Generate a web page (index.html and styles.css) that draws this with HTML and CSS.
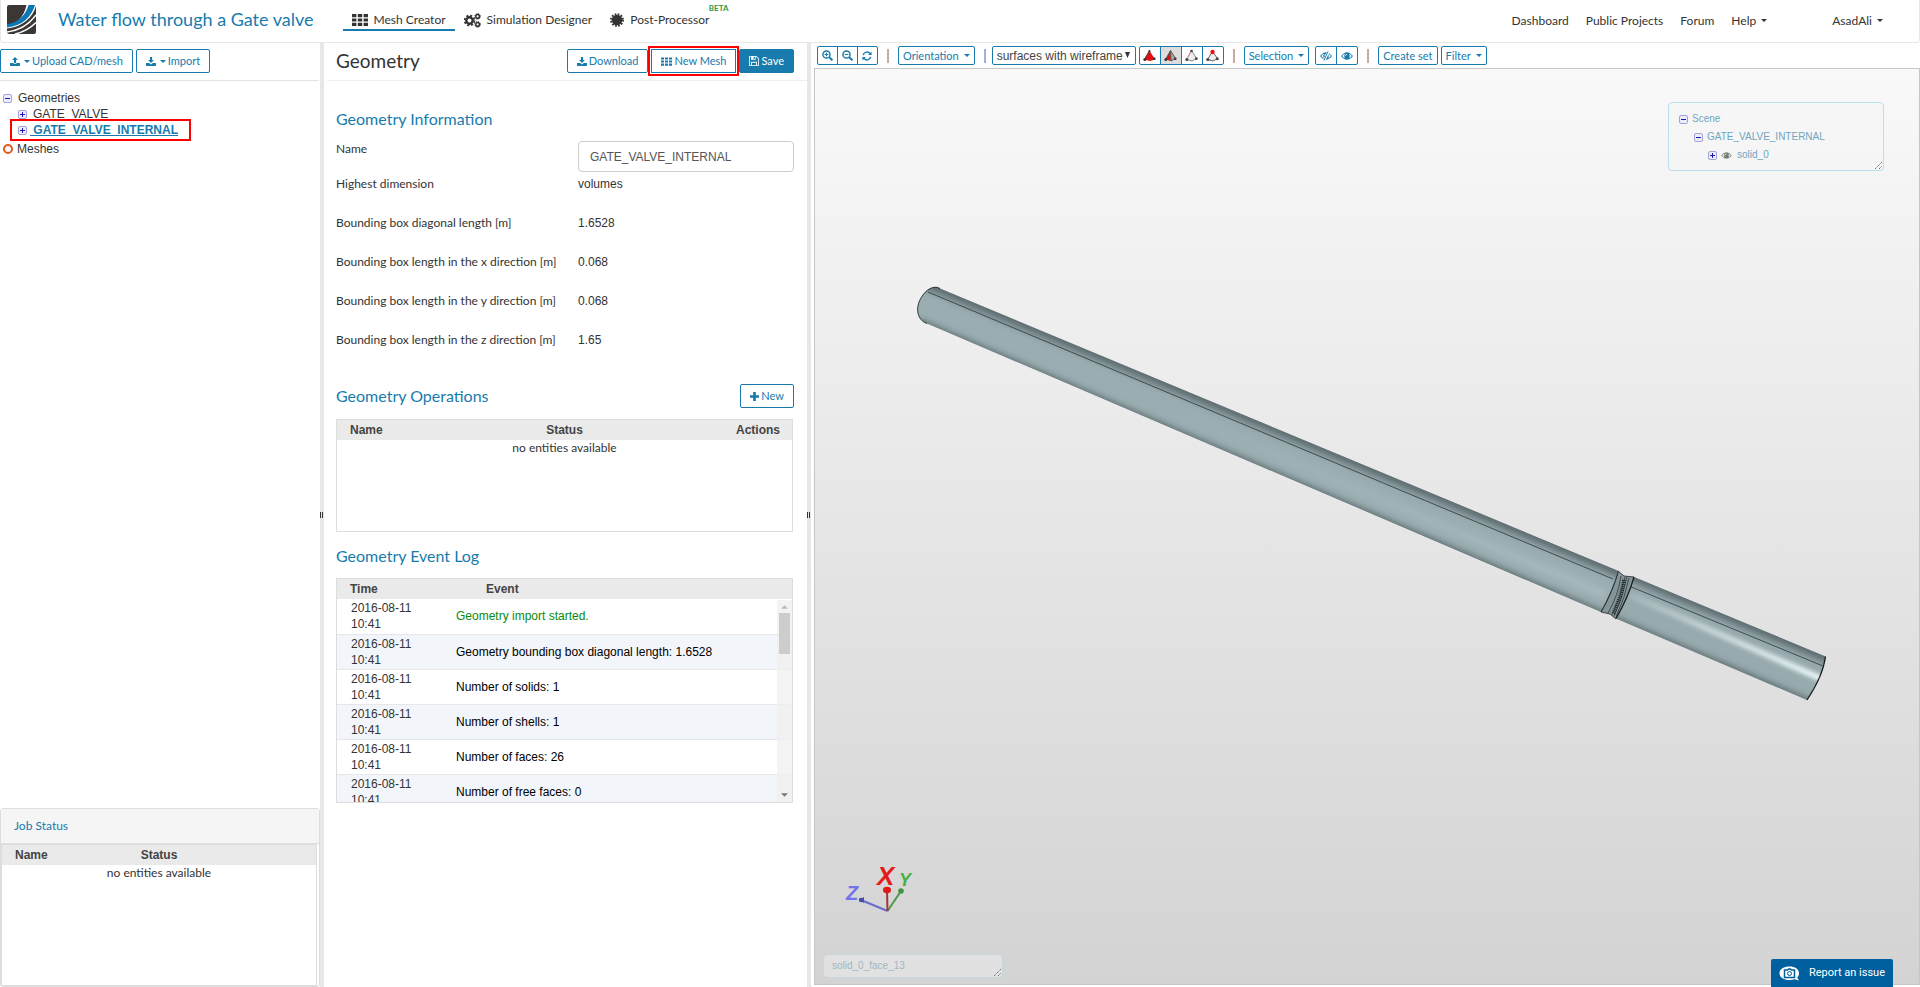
FILE: index.html
```html
<!DOCTYPE html>
<html lang="en">
<head>
	<meta charset="UTF-8">
	<title>Water flow through a Gate valve</title>
	<link rel="stylesheet" href="styles.css">
</head>
<body>
	<!-- icon set -->
	<svg class="defs" width="0" height="0">
		<symbol id="i-grid" viewBox="0 0 16 12"><path d="M0 0h4.4v3.2H0zM5.8 0h4.4v3.2H5.8zM11.6 0H16v3.2h-4.4zM0 4.4h4.4v3.2H0zM5.8 4.4h4.4v3.2H5.8zM11.6 4.4H16v3.2h-4.4zM0 8.8h4.4V12H0zM5.8 8.8h4.4V12H5.8zM11.6 8.8H16V12h-4.4z"/></symbol>
		<symbol id="i-cogs" viewBox="0 0 17 15">
			<g fill="none" stroke="currentColor">
				<circle cx="5.5" cy="7.5" r="3.2" stroke-width="2.4"/>
				<circle cx="5.5" cy="7.5" r="4.9" stroke-width="1.8" stroke-dasharray="2.1 1.75"/>
				<circle cx="13.6" cy="3.4" r="1.8" stroke-width="1.5"/>
				<circle cx="13.6" cy="3.4" r="2.8" stroke-width="1" stroke-dasharray="1.2 1"/>
				<circle cx="13.6" cy="11.4" r="1.8" stroke-width="1.5"/>
				<circle cx="13.6" cy="11.4" r="2.8" stroke-width="1" stroke-dasharray="1.2 1"/>
			</g>
		</symbol>
		<symbol id="i-burst" viewBox="0 0 14 14">
			<circle cx="7" cy="7" r="5.2"/>
			<circle cx="7" cy="7" r="5.9" fill="none" stroke="currentColor" stroke-width="2" stroke-dasharray="1.7 1.39"/>
		</symbol>
		<symbol id="i-upload" viewBox="0 0 12 11"><path d="M6 0l3.6 3.8H7.3v3.4H4.7V3.8H2.4zM0 7.4h3.9c.3.7 1 1 2.1 1s1.8-.3 2.1-1H12V11H0z"/></symbol>
		<symbol id="i-download" viewBox="0 0 12 11"><path d="M4.7 0h2.6v3.6h2.3L6 7.3 2.4 3.6h2.3zM0 7.4h3.7L6 9.3l2.3-1.9H12V11H0z"/></symbol>
		<symbol id="i-save" viewBox="0 0 12 12"><path fill-rule="evenodd" d="M1 0h8l3 3v8a1 1 0 0 1-1 1H1a1 1 0 0 1-1-1V1a1 1 0 0 1 1-1zM1 1v10h1.5V7h7v4H11V3.5L8.6 1H8v3.5H2.5V1zM5.5 1v2.5H7V1zM3.5 8v3h5V8z"/></symbol>
		<symbol id="i-plus" viewBox="0 0 10 10"><path d="M3.5 0h3v3.5H10v3H6.5V10h-3V6.5H0v-3h3.5z"/></symbol>
		<symbol id="i-caret" viewBox="0 0 8 4"><path d="M0 0h8L4 4z"/></symbol>
		<symbol id="i-zoomin" viewBox="0 0 12 12"><g fill="none" stroke="currentColor"><circle cx="4.9" cy="4.9" r="3.9" stroke-width="1.6"/><path d="M7.8 7.8L11.3 11.3" stroke-width="2.2"/><path d="M2.9 4.9h4M4.9 2.9v4" stroke-width="1.2"/></g></symbol>
		<symbol id="i-zoomout" viewBox="0 0 12 12"><g fill="none" stroke="currentColor"><circle cx="4.9" cy="4.9" r="3.9" stroke-width="1.6"/><path d="M7.8 7.8L11.3 11.3" stroke-width="2.2"/><path d="M2.9 4.9h4" stroke-width="1.2"/></g></symbol>
		<symbol id="i-refresh" viewBox="0 0 12 12"><path d="M1.5 5A4.6 4.6 0 0 1 9.6 3M10.5 7A4.6 4.6 0 0 1 2.4 9" fill="none" stroke="currentColor" stroke-width="1.7"/><path d="M11.5.5v4.2H7.3zM.5 11.5V7.3h4.2z"/></symbol>
		<symbol id="i-eye" viewBox="0 0 12 8"><path fill-rule="evenodd" d="M0 4Q6-3.6 12 4 6 11.6 0 4zM1.2 4Q2.4 5.8 4 6.3 2.5 4 4 1.7 2.4 2.2 1.2 4zM10.8 4Q9.6 2.2 8 1.7 9.5 4 8 6.3 9.6 5.8 10.8 4zM6 1.7q-1.7.3-1.8 2h.9Q5.2 2.6 6 2.5z"/></symbol>
		<symbol id="i-minus-box" viewBox="0 0 9 9"><rect x=".5" y=".5" width="8" height="8" rx="1.5" fill="#ececfa" stroke="#a3a3d6"/><path d="M2 4h5v1H2z" fill="#1a1ac0"/></symbol>
		<symbol id="i-plus-box" viewBox="0 0 9 9"><rect x=".5" y=".5" width="8" height="8" rx="1.5" fill="#ececfa" stroke="#a3a3d6"/><path d="M2 4h5v1H2zM4 2h1v5H4z" fill="#1a1ac0"/></symbol>
		<symbol id="i-grip" viewBox="0 0 8 8"><path d="M1 8L8 1M5 8l3-3" fill="none" stroke="#777" stroke-dasharray="1.5 .6"/></symbol>
	</svg>

	<header class="topbar">
		<a class="logo" href="#" aria-label="Home">
			<svg width="29" height="29" viewBox="0 0 29 29">
				<rect width="29" height="29" rx="2" fill="#3c3735"/>
				<path d="M0 20.5C10 19 17 12 19.5 0H29v1C26 12 16 22 0 23.5z" fill="#fff"/>
				<path d="M0 19.3C10 18 18.5 11 21.5 0H28C24.5 12 15 21 0 22.5z" fill="#0b78b5"/>
				<path d="M0 27c13-1.5 22-7.5 29-17" fill="none" stroke="#fff" stroke-width="1.6"/>
				<path d="M8 29c9-2 15-5.5 21-11.5" fill="none" stroke="#fff" stroke-width="1.5"/>
			</svg>
		</a>
		<h1 class="project">Water flow through a Gate valve</h1>
		<nav class="tabs">
			<a class="tab active" href="#"><svg class="icon" width="16" height="12"><use href="#i-grid"/></svg>Mesh Creator</a>
			<a class="tab" href="#"><svg class="icon" width="17" height="15"><use href="#i-cogs"/></svg>Simulation Designer</a>
			<a class="tab" href="#"><svg class="icon" width="14" height="14"><use href="#i-burst"/></svg>Post-Processor<sup class="beta">BETA</sup></a>
		</nav>
		<nav class="links">
			<a href="#">Dashboard</a>
			<a href="#">Public Projects</a>
			<a href="#">Forum</a>
			<a href="#">Help <svg class="icon" width="6" height="3"><use href="#i-caret"/></svg></a>
			<a class="user" href="#">AsadAli <svg class="icon" width="6" height="3"><use href="#i-caret"/></svg></a>
		</nav>
	</header>

	<main class="workbench">
		<aside class="sidebar">
			<div class="side-bar">
				<button class="btn" type="button"><svg class="icon" width="10" height="9"><use href="#i-upload"/></svg><svg class="icon caret" width="6" height="3"><use href="#i-caret"/></svg>Upload CAD/mesh</button>
				<button class="btn" type="button"><svg class="icon" width="10" height="9"><use href="#i-download"/></svg><svg class="icon caret" width="6" height="3"><use href="#i-caret"/></svg>Import</button>
			</div>
			<ul class="tree">
				<li><div class="node"><svg width="9" height="9"><use href="#i-minus-box"/></svg><span>Geometries</span></div>
					<ul>
						<li><div class="node"><svg width="9" height="9"><use href="#i-plus-box"/></svg><span>GATE_VALVE</span></div></li>
						<li><div class="node marked"><svg width="9" height="9"><use href="#i-plus-box"/></svg><a href="#">&nbsp;GATE_VALVE_INTERNAL</a></div></li>
					</ul>
				</li>
				<li class="meshes"><div class="node"><i class="ring"></i><span>Meshes</span></div></li>
			</ul>
			<section class="jobs">
				<h2>Job Status</h2>
				<div class="grid-box">
					<table class="grid">
						<thead><tr><th>Name</th><th class="mid">Status</th><th></th></tr></thead>
						<tbody><tr><td class="none" colspan="3">no entities available</td></tr></tbody>
					</table>
				</div>
			</section>
		</aside>

		<div class="splitter"><i></i></div>

		<section class="editor">
			<div class="editor-bar">
				<h2>Geometry</h2>
				<button class="btn" type="button"><svg class="icon" width="10" height="9"><use href="#i-download"/></svg>Download</button>
				<button class="btn marked" type="button"><svg class="icon" width="11" height="9"><use href="#i-grid"/></svg>New Mesh</button>
				<button class="btn primary" type="button"><svg class="icon" width="10" height="10"><use href="#i-save"/></svg>Save</button>
			</div>
			<div class="editor-body">
				<h3>Geometry Information</h3>
				<div class="prop prop-name"><label for="geo-name">Name</label><input id="geo-name" type="text" value="GATE_VALVE_INTERNAL"></div>
				<dl class="props">
					<div class="prop"><dt>Highest dimension</dt><dd>volumes</dd></div>
					<div class="prop"><dt>Bounding box diagonal length [m]</dt><dd>1.6528</dd></div>
					<div class="prop"><dt>Bounding box length in the x direction [m]</dt><dd>0.068</dd></div>
					<div class="prop"><dt>Bounding box length in the y direction [m]</dt><dd>0.068</dd></div>
					<div class="prop"><dt>Bounding box length in the z direction [m]</dt><dd>1.65</dd></div>
				</dl>
				<div class="ops-head">
					<h3>Geometry Operations</h3>
					<button class="btn" type="button"><svg class="icon" width="9" height="9"><use href="#i-plus"/></svg>New</button>
				</div>
				<div class="grid-box ops">
					<table class="grid">
						<thead><tr><th>Name</th><th class="mid">Status</th><th class="end">Actions</th></tr></thead>
						<tbody><tr><td class="none" colspan="3">no entities available</td></tr></tbody>
					</table>
				</div>
				<h3>Geometry Event Log</h3>
				<div class="grid-box log">
					<table class="grid">
						<thead><tr><th class="time">Time</th><th class="event">Event</th></tr></thead>
						<tbody>
							<tr><td>2016-08-11<br>10:41</td><td class="msg ok">Geometry import started.</td></tr>
							<tr><td>2016-08-11<br>10:41</td><td class="msg">Geometry bounding box diagonal length: 1.6528</td></tr>
							<tr><td>2016-08-11<br>10:41</td><td class="msg">Number of solids: 1</td></tr>
							<tr><td>2016-08-11<br>10:41</td><td class="msg">Number of shells: 1</td></tr>
							<tr><td>2016-08-11<br>10:41</td><td class="msg">Number of faces: 26</td></tr>
							<tr><td>2016-08-11<br>10:41</td><td class="msg">Number of free faces: 0</td></tr>
						</tbody>
					</table>
					<div class="scroll">
						<svg class="up" width="7" height="4"><use href="#i-caret"/></svg>
						<i></i>
						<svg width="7" height="4"><use href="#i-caret"/></svg>
					</div>
				</div>
			</div>
		</section>

		<div class="splitter"><i></i></div>

		<section class="viewer">
			<div class="tools">
				<div class="group">
					<button class="tool" type="button" aria-label="Zoom in"><svg class="icon" width="11" height="11"><use href="#i-zoomin"/></svg></button>
					<button class="tool" type="button" aria-label="Zoom out"><svg class="icon" width="11" height="11"><use href="#i-zoomout"/></svg></button>
					<button class="tool" type="button" aria-label="Reset view"><svg class="icon" width="10" height="10"><use href="#i-refresh"/></svg></button>
				</div>
				<i class="sep"></i>
				<button class="tool text" type="button">Orientation <svg class="icon" width="6" height="3"><use href="#i-caret"/></svg></button>
				<i class="sep"></i>
				<div class="mode">
					<select aria-label="Render mode"><option>surfaces with wireframe</option></select>
					<svg width="5" height="6" viewBox="0 0 5 6"><path d="M0 0h5L2.5 6z"/></svg>
				</div>
				<div class="group pick">
					<button class="tool" type="button" aria-label="Pick volumes"><svg width="13" height="13" viewBox="0 0 13 13"><path d="M6.5 1.5L12 10.5 7 12 1 10.5z" fill="#e01010"/><path d="M6.5 1.5L1.5 10.5" fill="none" stroke="#444"/><circle cx="1.8" cy="10.5" r="1.5" fill="#333"/><circle cx="11.3" cy="9.7" r="1.3" fill="#333"/><circle cx="6.5" cy="2" r="1" fill="#333"/></svg></button>
					<button class="tool on" type="button" aria-label="Pick faces"><svg width="13" height="13" viewBox="0 0 13 13"><path d="M6.5 1.5L7 12 1.5 10.5z" fill="#e01010"/><path d="M6.5 1.5L11 9 7 12z" fill="#aaa"/><path d="M6.5 1.5L1.5 10.5M6.5 1.5L7 12l4.5-2.5z" fill="none" stroke="#555"/><circle cx="1.8" cy="10.5" r="1.5" fill="#333"/><circle cx="11.3" cy="9.7" r="1.3" fill="#333"/></svg></button>
					<button class="tool" type="button" aria-label="Pick edges"><svg width="13" height="13" viewBox="0 0 13 13"><path d="M1.5 10.5L7 12l4.5-2.5-5-8z" fill="#eee" stroke="#888"/><path d="M6.5 1.5L1.5 10.5" stroke="#e88"/><circle cx="1.8" cy="10.5" r="1.5" fill="#444"/><circle cx="11.3" cy="9.7" r="1.4" fill="#444"/><circle cx="6.5" cy="2" r="1.3" fill="#444"/></svg></button>
					<button class="tool" type="button" aria-label="Pick nodes"><svg width="13" height="13" viewBox="0 0 13 13"><path d="M1.5 10.5L7 12l4.5-2.5-5-7z" fill="#eee" stroke="#666"/><circle cx="1.8" cy="10.5" r="1.6" fill="#444"/><circle cx="11.3" cy="9.7" r="1.5" fill="#444"/><circle cx="6.5" cy="3" r="2.2" fill="#f01010"/></svg></button>
				</div>
				<i class="sep"></i>
				<button class="tool text" type="button">Selection <svg class="icon" width="6" height="3"><use href="#i-caret"/></svg></button>
				<div class="group eyes">
					<button class="tool" type="button" aria-label="Hide selection"><svg class="icon" width="12" height="10" viewBox="0 -1 12 10"><use href="#i-eye" width="12" height="8"/><path d="M4 8.5L8.5-.5" stroke="#fff" stroke-width="2.6"/><path d="M3.8 8.5L8-.5" stroke="currentColor"/></svg></button>
					<button class="tool" type="button" aria-label="Show all"><svg class="icon" width="12" height="8"><use href="#i-eye"/></svg></button>
				</div>
				<i class="sep"></i>
				<button class="tool text" type="button">Create set</button>
				<button class="tool text" type="button">Filter <svg class="icon" width="6" height="3"><use href="#i-caret"/></svg></button>
			</div>

			<div class="canvas">
				<svg class="model" viewBox="815 69 1104 915">
					<defs>
						<filter id="soft" filterUnits="userSpaceOnUse" x="850" y="250" width="1050" height="500"><feGaussianBlur stdDeviation="3.5"/></filter>
						<filter id="glow" filterUnits="userSpaceOnUse" x="850" y="250" width="1050" height="500"><feGaussianBlur stdDeviation="2"/></filter>
						<clipPath id="long"><path d="M940 288.5L1618.5 571Q1613 590 1601 612L927 323.5C917 320 915 308 921 298 926 289 934 285 940 288.5z"/></clipPath>
						<clipPath id="short"><path d="M1634 577L1825.5 656.5Q1823 676 1807 700L1616 618.5Q1628 598 1634 577z"/></clipPath>
						<linearGradient id="shine" gradientUnits="userSpaceOnUse" x1="1630" y1="595" x2="1818" y2="677"><stop offset="0" stop-color="#dbe8e8" stop-opacity=".2"/><stop offset=".4" stop-color="#dbe8e8" stop-opacity=".7"/><stop offset="1" stop-color="#eefafa"/></linearGradient>
						<linearGradient id="faint" gradientUnits="userSpaceOnUse" x1="1150" y1="400" x2="1610" y2="590"><stop offset="0" stop-color="#a9bbbf" stop-opacity="0"/><stop offset="1" stop-color="#a9bbbf"/></linearGradient>
					</defs>
					<!-- valve neck -->
					<path d="M1618 571l6 5 10 1q-4 22-18 42l-6-5-9-2q12-20 17-41z" fill="#84959a" stroke="#222" stroke-width=".8"/>
					<path d="M1621 576q-3 20-13 37M1625 577q-4 20-13 38M1627 577q-4 20-13 39M1629 578q-4 20-13 39" fill="none" stroke="#252b2d" stroke-width=".7"/>
					<path d="M1624 580q-3 18-11 34" fill="none" stroke="#252b2d" stroke-width="4" stroke-dasharray="1 1"/>
					<g clip-path="url(#long)">
						<path d="M900 270h740v360H900z" fill="#9aadb1"/>
						<path d="M1150 402L1606 595" stroke="url(#faint)" stroke-width="8" filter="url(#soft)"/>
						<path d="M925 282L1625 573.5" stroke="#5c6b6e" stroke-width="12" filter="url(#soft)"/>
						<path d="M918 322L1606 616" stroke="#3e4b4e" stroke-width="5" filter="url(#soft)"/>
						<path d="M928 292L1400 490 1613 579" stroke="#1e2627" stroke-width=".7" fill="none"/>
					</g>
					<path d="M1618.5 571Q1613 590 1601 612M940 288.5C934 285 926 289 921 298 915 308 917 320 927 323.5" fill="none" stroke="#1e2425" stroke-width=".9"/>
					<g clip-path="url(#short)">
						<path d="M1600 560h240v150h-240z" fill="#97aaae"/>
						<path d="M1626 572L1832 658" stroke="#5c6b6e" stroke-width="13" filter="url(#soft)"/>
						<path d="M1610 618L1812 704" stroke="#3e4b4e" stroke-width="5" filter="url(#soft)"/>
						<path d="M1630 595L1822 679" stroke="url(#shine)" stroke-width="6" filter="url(#glow)"/>
						<path d="M1629 586L1823 666" stroke="#1e2627" stroke-width=".7"/>
					</g>
					<path d="M1634 577Q1628 598 1616 618.5M1825.5 656.5Q1823 676 1807 700" fill="none" stroke="#161b1c" stroke-width="1.2"/>
					<!-- orientation axes -->
					<g fill="none">
						<path d="M887.5 911L861 900" stroke="#6a6ad0" stroke-width="2"/>
						<path d="M887.5 911L901 891" stroke="#4a9a4a" stroke-width="2"/>
						<path d="M887.5 911L887 890" stroke="#a83238" stroke-width="2"/>
					</g>
					<path d="M859 900l5-3v6z" fill="#4c4ca8"/><circle cx="861" cy="900" r="2.2" fill="#4c4ca8"/>
					<circle cx="901" cy="891" r="2.8" fill="#3f963f"/>
					<ellipse cx="887" cy="890" rx="4" ry="3.2" fill="#e01818"/>
					<g class="axes"><text x="846" y="900" font-size="20" fill="#7272ea">Z</text><text x="877" y="885" font-size="26" fill="#e31b1b">X</text><text x="899" y="886" font-size="18" fill="#45b245">Y</text></g>
				</svg>
				<div class="scene">
					<ul>
						<li><svg width="9" height="9"><use href="#i-minus-box"/></svg>Scene</li>
						<li class="l2"><svg width="9" height="9"><use href="#i-minus-box"/></svg>GATE_VALVE_INTERNAL</li>
						<li class="l3"><svg width="9" height="9"><use href="#i-plus-box"/></svg><svg class="see" width="11" height="7"><use href="#i-eye"/></svg>solid_0</li>
					</ul>
					<svg class="grip" width="8" height="8"><use href="#i-grip"/></svg>
				</div>
				<div class="picked">solid_0_face_13<svg class="grip" width="8" height="8"><use href="#i-grip"/></svg></div>
			</div>
		</section>
	</main>

	<button class="report" type="button">
		<svg width="21" height="15" viewBox="0 0 21 15"><path d="M10.5.5C16 .5 20 3 20 7.2c0 2-.7 3.3-1.9 4.4l1.9 2.9-4.3-1.3c-1.5.5-3.2.8-5.2.8C5 14 .5 11.5.5 7.2S5 .5 10.5.5z" fill="#fff"/><path d="M5.5 4h3l1-1h2l1 1h3v7.5h-10z" fill="none" stroke="#005f9e" stroke-width="1.5"/><circle cx="10.5" cy="7.5" r="2" fill="none" stroke="#005f9e"/></svg>
		Report an issue
	</button>
</body>
</html>
```
FILE: styles.css
```css
*{box-sizing: border-box;}
body,h1,h2,h3,ul,dl,dd{margin: 0;padding: 0;}
body{display: flex;flex-direction: column;min-height: 100vh;font: 12px/16px Lato,sans-serif;color: #333;background: #fff;}
h1,h2,h3{font-weight: normal;}
ul{list-style: none;}
a{color: inherit;text-decoration: none;}
button,input,select{font: inherit;margin: 0;}
svg{display: block;flex: none;}
.defs{position: absolute;}
.icon{fill: currentColor;}

/* top bar */
.topbar{display: flex;align-items: center;height: 43px;padding: 0 36px 4px 6px;border: 1px solid #e7e7e7;border-top: 0;border-radius: 0 0 4px 4px;}
.topbar .project{margin-left: 22px;font-size: 18px;line-height: 24px;color: #177bae;white-space: nowrap;}
.tabs{display: flex;align-self: flex-end;height: 20px;margin: 0 0 7px 29px;}
.tab{position: relative;display: flex;align-items: center;gap: 6px;padding: 0 9px;border-bottom: 2px solid transparent;white-space: nowrap;}
.tab.active{border-color: #177bae;}
.beta{position: absolute;right: -10px;top: -8px;font-size: 8px;font-weight: bold;line-height: 10px;color: #2f9a41;}
.links{display: flex;gap: 17px;margin-left: auto;padding-top: 3px;}
.links a{display: flex;align-items: center;gap: 5px;white-space: nowrap;}
.links .user{margin-left: 48px;}

.workbench{flex: 1;display: grid;grid-template-columns: calc(100% / 6) 4px calc(25% + 3px) 4px 1fr;}
.splitter{display: flex;align-items: center;justify-content: center;background: #e7e7e7;}
.splitter i{width: 3px;height: 6px;border: solid #333;border-width: 0 1px;}

.btn{display: flex;align-items: center;gap: 2px;height: 24px;padding: 0 9px;border: 1px solid #177bae;border-radius: 2px;background: #fff;color: #177bae;font-size: 11px;white-space: nowrap;}
.btn .caret{margin-left: 2px;}
.btn.primary{background: #177bae;color: #fff;}
.marked{border-radius: 0;outline: 2px solid #f00;outline-offset: 1px;}

/* left column */
.sidebar{display: flex;flex-direction: column;}
.side-bar{display: flex;gap: 3px;padding: 6px 0 7px;margin-right: 1px;border-bottom: 1px solid #e3e3e3;}
.tree{padding: 9px 0 0 3px;font: 12px/16px "Liberation Sans",Arial,sans-serif;}
.tree ul{padding-left: 10px;}
.node{display: flex;align-items: center;gap: 6px;width: 175px;}
.tree ul .node{padding-left: 5px;}
.tree .node.marked{gap: 3px;}
.tree a{font-weight: bold;color: #177bae;text-decoration: underline;}
.meshes{margin-top: 3px;}
.meshes .node{gap: 4px;}
.ring{width: 10px;height: 10px;border: 2px solid #e2571e;border-radius: 50%;}
.jobs{margin: auto 0 0;border: 1px solid #ddd;border-radius: 3px;padding-right: 2px;}
.jobs h2{margin-right: -2px;padding: 9px 13px;border-bottom: 1px solid #ddd;background: #f5f5f5;font-size: 12px;color: #177bae;}
.jobs .grid-box{height: 142px;}

/* tables */
.grid-box{position: relative;overflow: hidden;border: 1px solid #ddd;}
.grid{width: 100%;table-layout: fixed;border-collapse: collapse;font: 12px/16px "Liberation Sans",Arial,sans-serif;}
.grid th{height: 20px;padding: 0 13px;background: #eaeaea;text-align: left;color: #444;}
.grid .mid{text-align: center;}
.grid .end{padding-right: 12px;text-align: right;}
.grid td{padding: 1px 0 1px 14px;vertical-align: middle;}
.grid .none{padding: 0;text-align: center;font: 12px/16px Lato,sans-serif;}

/* middle column */
.editor-bar{display: flex;gap: 3px;padding: 6px 13px 7px 9px;margin-left: 3px;border-bottom: 1px solid #eee;}
.editor-bar h2{flex: 1;font-size: 19px;line-height: 24px;}
.editor-body{padding: 28px 14px 0 12px;}
.editor-body h3{font-size: 16px;line-height: 20px;color: #177bae;}
.prop{display: grid;grid-template-columns: 242px 1fr;}
.prop-name{margin: 12px -1px 4px 0;}
.props .prop{min-height: 39px;}
.prop dd{font: 12px/16px "Liberation Sans",Arial,sans-serif;}
.prop input{width: 100%;height: 31px;padding: 0 11px;border: 1px solid #ccc;border-radius: 4px;font: 12px/16px "Liberation Sans",Arial,sans-serif;color: #555;}
.ops-head{display: flex;justify-content: space-between;align-items: center;margin: 13px -1px 11px 0;}
.ops{height: 113px;margin-bottom: 14px;}
.log{height: 225px;margin-top: 12px;}
.log th.time{width: 119px;}
.log th.event{padding-left: 30px;}
.log tbody tr{height: 35px;border-bottom: 1px solid #e7e7e7;}
.log tbody tr:nth-child(even){background: #f2f6fb;}
.grid .msg{padding-left: 0;color: #000;}
.grid .ok{color: #0a8a0a;}
.scroll{position: absolute;top: 21px;right: 0;bottom: 0;display: flex;flex-direction: column;align-items: center;width: 15px;padding: 5px 0;background: rgba(240,240,240,.8);fill: #777;}
.scroll .up{transform: rotate(180deg);fill: #bbb;}
.scroll i{width: 11px;height: 41px;margin: 4px 0 auto;background: #cdcdcd;}

/* viewer */
.viewer{display: flex;flex-direction: column;min-width: 0;padding: 3px 0 2px 3px;}
.tools{display: flex;align-items: center;height: 19px;margin-bottom: 3px;padding-left: 3px;}
.group{display: flex;}
.tool{display: flex;align-items: center;justify-content: center;gap: 5px;width: 21px;height: 19px;padding: 0;border: 1px solid #177bae;background: #fff;color: #177bae;white-space: nowrap;}
.group .tool + .tool{margin-left: -1px;}
.group .tool:first-child{border-radius: 2px 0 0 2px;}
.group .tool:last-child{border-radius: 0 2px 2px 0;}
.tool.text{width: auto;padding: 0 4px;border-radius: 2px;font-size: 11px;}
.tool.on{background: #ddd;}
.tool.text + .tool.text{margin-left: 3px;}
.sep{width: 2px;height: 14px;margin: 0 9px;border-left: 1px solid #9db4dc;border-right: 1px solid #c8a99c;}
.mode{position: relative;margin: 0 3px 0 -3px;}
.mode select{display: block;width: 144px;height: 19px;padding: 0 4px;appearance: none;border: 1px solid #177bae;border-radius: 2px;background: #fff;font: 12px/16px "Liberation Sans",Arial,sans-serif;color: #444;}
.mode svg{position: absolute;right: 6px;top: 6px;fill: #333;}
.pick .tool{width: 22px;}
.eyes{margin-left: 6px;}
.eyes .tool{width: 22px;}
.canvas{position: relative;flex: 1;border: 1px solid #c6c6c6;background: linear-gradient(#f9f9f9,#d3d3d3);}
.model{position: absolute;inset: 0;width: 100%;height: 100%;}
.axes{font-family: "Liberation Sans",Arial,sans-serif;font-weight: bold;font-style: italic;}
.scene,.picked{position: absolute;border: 1px solid #b7dfec;border-radius: 4px;font: 10px/18px "Liberation Sans",Arial,sans-serif;color: #6ea6c0;}
.scene{top: 33px;right: 35px;width: 216px;height: 69px;padding: 7px 10px;background: rgba(245,245,245,.5);}
.scene li{display: flex;align-items: center;gap: 4px;}
.scene .l2{padding-left: 15px;}
.scene .l3{padding-left: 29px;}
.scene .see{margin-right: 1px;fill: #777b72;}
.grip{position: absolute;right: 1px;bottom: 1px;}
.picked{left: 8px;bottom: 6px;width: 180px;height: 24px;padding: 2px 8px;border-color: #c5d6dc;background: #e1e1e1;color: #9fb7c3;}

.report{position: fixed;right: 27px;bottom: 0;display: flex;align-items: center;gap: 9px;height: 28px;padding: 0 8px;border: 0;border-radius: 2px 2px 0 0;background: #005f9e;font: 11px/16px Roboto,sans-serif;color: #fff;white-space: nowrap;}
```
